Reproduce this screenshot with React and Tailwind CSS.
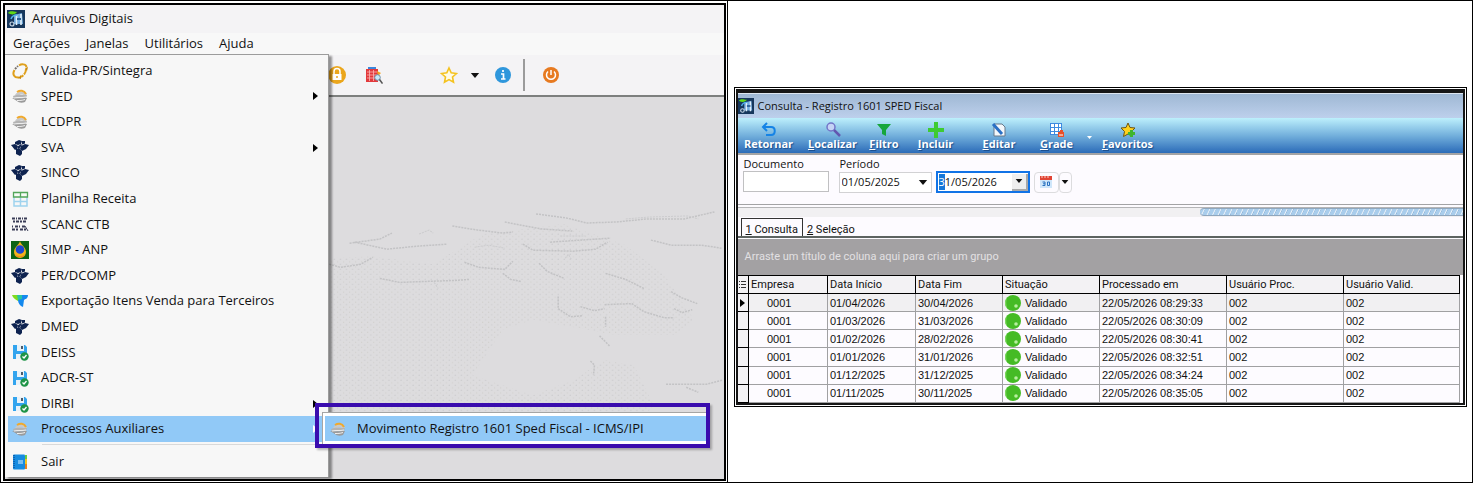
import { useEffect, useRef, useState } from "react";

const AppIcon = ({ className }) => (
  <svg viewBox="0 0 18 18" className={className} aria-hidden="true">
    <rect width="18" height="18" fill="#17375c" />
    <path d="M7 5l8-2 1 11H7z" fill="#6fa9dc" />
    <path d="M9.500 5v10M14 4v11" stroke="#e3f0fa" strokeWidth="1.600" />
    <path d="M10 9h4" stroke="#2b5f96" strokeWidth="2" />
    <path d="M1 3c3-3 5-1 9-1-2 3-6 3-9 1z" fill="#5fd816" />
    <circle cx="5" cy="14" r="2" fill="none" stroke="#c9d8e6" strokeWidth="1.200" />
    <path d="M4 9c1-3 3-4 6-4" stroke="#4fb4ee" fill="none" strokeWidth="1.500" />
  </svg>
);

const CycleIcon = () => (
  <svg viewBox="0 0 18 18" className="size-[18px]" aria-hidden="true">
    <g fill="none" stroke="#dfa01c" strokeWidth="2">
      <path d="M8 15.500C3 16 1 12 3.500 8" />
      <path d="M8 3.500C10 2 15 1.500 15.500 5" />
      <path d="M15 7c0 4-2 6-5 8" strokeDasharray="6 1" />
      <path d="M4 7L7 4" stroke="#77706a" strokeDasharray="2 1" />
    </g>
    <path d="M10 13v4l-3-1zM14 6l3-1-1 4z" fill="#c98a10" />
  </svg>
);

const SpedIcon = () => (
  <svg viewBox="0 0 18 18" className="size-[18px]" aria-hidden="true">
    <path d="M4 8c2-4 8-5 12-1l-2 2c-2-2-5-2-7 0z" fill="#c9c9c9" />
    <path d="M6 5c3-2 7-2 9 2" fill="none" stroke="#f0a92d" strokeWidth="2" />
    <path d="M2 9c4-2 9-1 14-1l-1 3c-4 0-8 1-12 1z" fill="#b4b4b4" />
    <path d="M1 11c5 1 9 0 15 0l-2 4c-3 1-6 1-8-1z" fill="#9b9b9b" />
    <path d="M3 11c4-1 8 0 12-1M6 13.500c3 0 5 0 8-1" stroke="#eee" fill="none" />
  </svg>
);

const ReceitaIcon = () => (
  <svg viewBox="0 0 18 18" className="size-[18px]" aria-hidden="true">
    <g fill="#0e2350">
      <path d="M4 3l4-2 3 1-1 3-3 1-3-1z" />
      <path d="M11 2l3 0 0 2.500-3 1z" />
      <path d="M0 6l4-1 3 2-1 3-2 1z" />
      <path d="M10 7l4-2 4 1-3 4-4 2-2-2z" />
      <path d="M5 10l3-1 3 3 0 3-2 2-4-2z" />
      <path d="M6 8l4-3 1 1-3 4z" />
    </g>
  </svg>
);

const SheetIcon = () => (
  <svg viewBox="0 0 18 18" className="size-[18px]" aria-hidden="true">
    <path d="M3 7v9h13V7M9.500 6v10M3 11.500h13" fill="none" stroke="#9fd3ee" strokeWidth="1.500" />
    <path d="M2.500 2.500h14v4.500h-14zM9.500 2.500V7" fill="#f6fbf6" stroke="#52a65a" strokeWidth="1.300" />
  </svg>
);

const ScancIcon = () => (
  <svg viewBox="0 0 18 18" className="size-[18px]" aria-hidden="true">
    <g stroke="#3a3d57" fill="none">
      <path d="M1 3.500h15" strokeWidth="2" strokeDasharray="3 1 1 1" />
      <path d="M2 6.500h13" strokeWidth="2" strokeDasharray="2 1 3 1" />
      <path d="M1 11.500h13" strokeWidth="2" strokeDasharray="1 2 3 1" />
      <path d="M1 14.500h16" strokeWidth="2" strokeDasharray="3 1 2 2" />
      <path d="M14 11l3 5" />
    </g>
  </svg>
);

const AnpIcon = () => (
  <svg viewBox="0 0 18 18" className="size-[18px]" aria-hidden="true">
    <rect width="18" height="18" fill="#0c6416" />
    <path d="M9 0c1 4 6 6 6 11a6 6 0 01-12 0C3 6 8 4 9 0z" fill="#f2b21b" />
    <path d="M4 13a6 5 0 0010 0l-2 3H6z" fill="#f08a1c" />
    <circle cx="9" cy="8.500" r="4.300" fill="#1c46cf" />
  </svg>
);

const ExportIcon = () => (
  <svg viewBox="0 0 18 18" className="size-[18px]" aria-hidden="true">
    <path d="M1 3h7l2 5-3 1C4 7 2 6 1 3z" fill="#7fdc1e" />
    <path d="M6 3h6l-1 6-4-1z" fill="#28c3a4" />
    <path d="M11 3h6c0 4-3 4-4 5l-1 7c-3-1-5-4-5-7l4-1z" fill="#1489ee" />
  </svg>
);

const DiskIcon = () => (
  <svg viewBox="0 0 18 18" className="size-[18px]" aria-hidden="true">
    <path d="M2 2h12l2 2v12H2z" fill="#32a4ee" />
    <path d="M6 2h7v6H6zM5 11h7v5H5z" fill="#e9f2f8" />
    <path d="M10 3h2v3h-2z" fill="#4b5a6a" />
    <circle cx="13.500" cy="13.500" r="4.200" fill="#1f9447" />
    <path d="M11.500 13.500l1.500 1.500 2.500-3" stroke="#fff" strokeWidth="1.300" fill="none" />
  </svg>
);

const NotebookIcon = () => (
  <svg viewBox="0 0 18 18" className="size-[18px]" aria-hidden="true">
    <rect x="2" y="1.500" width="12" height="15" rx="1" fill="#168be0" />
    <path d="M3 2v14" stroke="#0f62b0" strokeWidth="2" strokeDasharray="1 1" />
    <path d="M7 8h5M7 10h5" stroke="#d8efff" />
    <path d="M14 2h2v4h-2z" fill="#6c4" />
    <path d="M14 6h2v5h-2z" fill="#f5c21a" />
    <path d="M14 11h2v5h-2z" fill="#e8821e" />
  </svg>
);

const CaretDown = ({ className }) => (
  <svg viewBox="0 0 10 6" className={className} fill="currentColor" aria-hidden="true">
    <path d="M0 0h10L5 6z" />
  </svg>
);

const menuItems = [
  { label: "Valida-PR/Sintegra", icon: CycleIcon },
  { label: "SPED", icon: SpedIcon, sub: true },
  { label: "LCDPR", icon: SpedIcon },
  { label: "SVA", icon: ReceitaIcon, sub: true },
  { label: "SINCO", icon: ReceitaIcon },
  { label: "Planilha Receita", icon: SheetIcon },
  { label: "SCANC CTB", icon: ScancIcon },
  { label: "SIMP - ANP", icon: AnpIcon },
  { label: "PER/DCOMP", icon: ReceitaIcon },
  { label: "Exportação Itens Venda para Terceiros", icon: ExportIcon },
  { label: "DMED", icon: ReceitaIcon },
  { label: "DEISS", icon: DiskIcon },
  { label: "ADCR-ST", icon: DiskIcon },
  { label: "DIRBI", icon: DiskIcon, sub: true },
  { label: "Processos Auxiliares", icon: SpedIcon, sub: true, active: true },
];

const rows = [
  ["0001", "01/04/2026", "30/04/2026", "Validado", "22/05/2026 08:29:33", "002", "002"],
  ["0001", "01/03/2026", "31/03/2026", "Validado", "22/05/2026 08:30:09", "002", "002"],
  ["0001", "01/02/2026", "28/02/2026", "Validado", "22/05/2026 08:30:41", "002", "002"],
  ["0001", "01/01/2026", "31/01/2026", "Validado", "22/05/2026 08:32:51", "002", "002"],
  ["0001", "01/12/2025", "31/12/2025", "Validado", "22/05/2026 08:34:24", "002", "002"],
  ["0001", "01/11/2025", "30/11/2025", "Validado", "22/05/2026 08:35:05", "002", "002"],
];

function MapBackdrop() {
  return (
    <svg viewBox="0 0 717 379" preserveAspectRatio="xMaxYMin slice" className="block h-full w-full" aria-hidden="true">
      <defs>
        <pattern id="dots" width="6" height="5" patternUnits="userSpaceOnUse">
          <circle cx="1" cy="1" r=".6" fill="#c6c6c9" />
          <circle cx="4" cy="3.500" r=".6" fill="#d0cfcb" />
        </pattern>
      </defs>
      <path
        d="M323 160l45-2 60 8 50-30 80-10 60 20 40 30 30 45-20 15-60 0-80-15-30 10-30 45 60 20 40-15 30-20 30 5 20 40-30 30H323z"
        fill="url(#dots)"
      />
      <g fill="none" stroke="#c3c3c5" strokeWidth="1.500" strokeDasharray="2 1">
        <path d="M323 165l14 4 20-3 12-7M346 145l30-4 12-6M351 144l32 7 30-3 30-2M376 180l20 4 25-1 30-1 14-1" />
        <path d="M448 128l25 4 25 3 10-1M500 124l15 3 22 4 30 2M531 116l30 4 20 5 30-1 30-3 37 0 30-7" />
        <path d="M518 146l10 6 40 1 22-2 12-7M545 144l30-2 30-2M645 142l20 5 30 0 20 3M460 164l14 5 26 2 8-8M498 175l8 6 10 2" />
        <path d="M534 165l8 8 17 7M600 175l20 6 18 9M553 198l0 12 12 8 12-1M575 208l14 4 10-2M599 206l27-1 12 8 20 6 10 0" />
        <path d="M665 193l10 6 16 6M668 210l8 4 10-3M600 218v10M594 237l10 10M585 262l4 4-1 10M660 285l40 0 16-4M680 288l12 5" />
      </g>
      <g fill="none" stroke="#ccccce">
        <path d="M415 136l10-4 4 3M430 184l4 6M560 160l3-4 3 5M470 149l14-2 16 3M620 121l25-2 37-1 10 3M555 138l25 0" strokeDasharray="2 1" />
      </g>
    </svg>
  );
}

function Submenu() {
  return (
    <div className="absolute top-[-13px] left-[307px] z-20 w-[395px] border-4 border-[#3a0cae] pt-[5px] pl-[3px] shadow-[2px_2px_2px_#0004]">
      <div className="border-t border-l border-[#a5a5a5] bg-white pt-[3px] pb-[3px] pl-[2px]">
        <button className="flex h-[25px] w-full items-center gap-[10px] bg-[#91c9f7] pl-1 text-left whitespace-nowrap">
          <SpedIcon />
          Movimento Registro 1601 Sped Fiscal - ICMS/IPI
        </button>
      </div>
    </div>
  );
}

function DropdownMenu() {
  return (
    <div className="absolute top-[49px] left-0 z-10 w-[324px] border-t border-r border-[#9c9c9c] bg-[#f7f7f7] pt-[3px] pb-px pl-[3px] shadow-[3px_2px_2px_#0006]">
      <ul className="grid h-[384px] auto-rows-fr">
        {menuItems.map(({ label, icon: Icon, sub, active }) => (
          <li key={label} className="relative">
            <button
              className={`flex h-full w-full items-center gap-3 pr-[10px] pl-[3px] text-left ${active ? "bg-[#91c9f7]" : ""}`}
            >
              <Icon />
              <span className="flex-1">{label}</span>
              {sub && (
                <svg viewBox="0 0 5 8" className={`h-2 w-[5px] ${active ? "text-white" : "text-black"}`} aria-hidden="true">
                  <path d="M0 0l5 4-5 4z" fill="currentColor" />
                </svg>
              )}
            </button>
            {active && <Submenu />}
          </li>
        ))}
      </ul>
      <hr className="mt-[2px] ml-[34px] border-[#d9d9d9]" />
      <button className="mt-[3px] flex h-7 w-full items-center gap-3 pl-[3px] text-left">
        <NotebookIcon />
        Sair
      </button>
    </div>
  );
}

function ArquivosDigitais() {
  return (
    <section className="min-w-0 flex-[723] border-r border-black bg-white pt-[2px] pr-px pb-px pl-[2px]">
      <div className="relative flex h-[478px] flex-col overflow-hidden border-2 border-black bg-[#dddcde] font-['Open_Sans','Noto_Sans',sans-serif] text-[13px] text-[#111]">
        <header className="flex h-[28px] items-center gap-[7px] bg-[#f4f3f5] pl-[2px]">
          <AppIcon className="size-[18px]" />
          <h1>Arquivos Digitais</h1>
        </header>
        <nav className="flex h-[22px] items-center gap-4 bg-[#f8f8f8] pl-2">
          <button>Gerações</button>
          <button>Janelas</button>
          <button>Utilitários</button>
          <button>Ajuda</button>
        </nav>
        <div className="flex h-[42px] items-center border-b-2 border-[#7d7f7e] bg-[#f4f3f5] pl-[323px]">
          <button aria-label="Bloquear">
            <svg viewBox="0 0 18 18" className="size-[18px]">
              <circle cx="9" cy="9" r="9" fill="#eba61c" />
              <rect x="4.500" y="8" width="9" height="6" fill="#fff" />
              <path d="M6 8V5.500a3 3 0 016 0V8" fill="none" stroke="#fff" strokeWidth="1.500" />
              <circle cx="9" cy="11" r="1" fill="#eba61c" />
            </svg>
          </button>
          <button aria-label="Consultar grade" className="ml-[19px]">
            <svg viewBox="0 0 18 18" className="size-[18px]">
              <path d="M3 1h8v3H3z" fill="#3b86dc" />
              <rect x="1" y="3" width="12" height="13" fill="#e2393c" />
              <path d="M2 6h10M2 9h10M2 12h10M4.500 4v11M8.500 4v11" stroke="#fbb5b2" strokeWidth=".8" />
              <path d="M12 5l4 2-3 3z" fill="#f3a41f" />
              <circle cx="12.500" cy="11.500" r="2.800" fill="#c9e8f8" stroke="#6d8fa6" />
              <path d="M14.500 13.500l3 4" stroke="#555" strokeWidth="1.500" />
            </svg>
          </button>
          <button aria-label="Favoritos" className="ml-[57px]">
            <svg viewBox="0 0 18 18" className="size-[18px]">
              <path
                d="M9 2l2.200 4.800 5.300.7-4 3.500 1 5.200L9 13.600l-4.500 2.600 1-5.200-4-3.500 5.300-.7z"
                fill="#fffbe6"
                stroke="#f4c21f"
                strokeWidth="1.600"
              />
            </svg>
          </button>
          <button aria-label="Mais favoritos" className="ml-3">
            <CaretDown className="h-[5px] w-[10px]" />
          </button>
          <button aria-label="Informações" className="ml-[14px]">
            <svg viewBox="0 0 18 18" className="size-[18px]">
              <circle cx="9" cy="9" r="8" fill="#2f97dc" />
              <path d="M9 4v2M7 8h2.500v5M7 13h4.500" stroke="#fff" strokeWidth="1.700" fill="none" />
            </svg>
          </button>
          <span className="ml-[11px] h-8 w-[2px] bg-[#9b9b9b]" />
          <button aria-label="Encerrar" className="ml-[17px]">
            <svg viewBox="0 0 18 18" className="size-[18px]">
              <circle cx="9" cy="9" r="8" fill="#e77a20" />
              <path d="M6 5.500a4.500 4.500 0 106 0M9 4v5" stroke="#fff" strokeWidth="1.500" fill="none" />
            </svg>
          </button>
        </div>
        <main className="min-h-0 flex-1">
          <MapBackdrop />
        </main>
        <DropdownMenu />
      </div>
    </section>
  );
}

const tools = [
  {
    label: "Retornar",
    width: "w-[60px]",
    icon: <path d="M6 1L2 5l4 4M2 5h8c5 0 5 8 0 8H5" fill="none" stroke="#1583e6" strokeWidth="2" />,
  },
  {
    label: "Localizar",
    hot: true,
    width: "w-[68px]",
    icon: (
      <>
        <circle cx="6" cy="5" r="4" fill="#c5d3f5" stroke="#7275c8" strokeWidth="1.500" />
        <path d="M9 8l6 6" stroke="#6257b0" strokeWidth="2.500" />
      </>
    ),
  },
  { label: "Filtro", hot: true, width: "w-[35px]", icon: <path d="M1 2h14l-5 6v6l-4-2V8z" fill="#17a63c" /> },
  {
    label: "Incluir",
    hot: true,
    width: "w-[68px]",
    icon: <path d="M6 0h4v6h6v4h-6v6H6v-6H0V6h6z" fill="#3ecb32" />,
  },
  {
    label: "Editar",
    hot: true,
    width: "w-[59px]",
    icon: (
      <>
        <path d="M3 2h8l3 3v9H3z" fill="#f3f7fb" stroke="#68798a" />
        <path d="M2 2l9 10" stroke="#2a6fc4" strokeWidth="3" />
      </>
    ),
  },
  {
    label: "Grade",
    hot: true,
    width: "w-[56px]",
    icon: (
      <>
        <rect x="1" y="1" width="12" height="12" fill="#fff" />
        <path d="M1.500 1v12M5.500 1v12M9.500 1v12M12.500 1v12M1 1.500h12M1 5.500h12M1 9.500h12M1 12.500h12" stroke="#3d8ae0" />
        <path d="M9 10h2V8h3v2h1v5H9z" fill="#e8502a" />
        <path d="M10 13h4" stroke="#fff" />
      </>
    ),
  },
  {
    label: "Favoritos",
    hot: true,
    width: "w-[66px]",
    icon: (
      <>
        <path d="M8 1l2 4.500 5 .500-3.500 3.500 1 5L8 12l-4.500 2.500 1-5L1 6l5-.500z" fill="#ffd21e" stroke="#6e5412" />
        <path d="M10 8h3v2h2v3h-2v2h-3v-2H8v-3h2z" fill="#3fb52f" />
      </>
    ),
  },
];

function ToolButton({ label, hot, width, icon }) {
  return (
    <button className={`flex flex-col items-center ${width}`}>
      <svg viewBox="0 0 16 16" className="size-4" aria-hidden="true">
        {icon}
      </svg>
      <span className="text-[11px] leading-3 font-bold text-white [text-shadow:1px_1px_1px_#1b4f8f]">
        {hot ? <u>{label[0]}</u> : label[0]}
        {label.slice(1)}
      </span>
    </button>
  );
}

function FilterBar() {
  const endRef = useRef(null);

  useEffect(() => {
    endRef.current.focus();
    endRef.current.setSelectionRange(0, 1);
  }, []);

  return (
    <form className="flex h-[52px] items-start border-t-2 border-b border-[#a3a3a5] bg-[#fdfbff] pt-[2px] pl-[5px] text-[11px]">
      <div className="flex w-24 flex-col">
        <label htmlFor="documento" className="pl-px leading-[14px]">Documento</label>
        <input id="documento" className="h-[21px] w-[86px] border border-[#c0c0c2] bg-white px-1 outline-none" />
      </div>
      <div className="flex flex-col">
        <label htmlFor="inicio" className="pl-px leading-[14px]">Período</label>
        <div className="flex items-center">
          <div className="flex h-[21px] w-[93px] items-center border border-[#d2d2d4] bg-white">
            <input id="inicio" defaultValue="01/05/2025" className="w-[78px] pl-[2px] outline-none" />
            <button type="button" aria-label="Abrir data inicial">
              <CaretDown className="h-[5px] w-[10px]" />
            </button>
          </div>
          <div className="ml-1 flex h-[22px] w-[94px] items-center border-2 border-[#1173e6] bg-white">
            <input
              ref={endRef}
              aria-label="Data final"
              defaultValue="31/05/2026"
              className="w-[74px] pl-px outline-none selection:bg-[#1677d8] selection:text-white"
            />
            <button
              type="button"
              aria-label="Abrir data final"
              className="flex h-[17px] w-4 items-center justify-center border-r-2 border-b-2 border-[#a9a9a9] bg-[#efefef]"
            >
              <CaretDown className="h-1 w-2" />
            </button>
          </div>
          <button
            type="button"
            aria-label="Calendário"
            className="ml-1 flex h-[21px] w-[25px] items-center justify-center rounded-sm border border-[#dcdcde]"
          >
            <svg viewBox="0 0 14 14" className="size-[14px]">
              <rect x="1" y="4" width="12" height="9" fill="#cfe6fa" />
              <rect x="1" y="1" width="12" height="4" fill="#e04434" />
              <path d="M3 1v2M6 1v2M9 1v2" stroke="#fbd0c8" />
              <path d="M3.500 7h2.500v3.500H3.500M4 8.800h2M8.500 7h2v3.500h-2z" fill="none" stroke="#2a72c0" />
            </svg>
          </button>
          <button
            type="button"
            aria-label="Mais períodos"
            className="flex h-[21px] w-[13px] items-center justify-center rounded-sm border border-[#dcdcde]"
          >
            <CaretDown className="h-1 w-2" />
          </button>
        </div>
      </div>
    </form>
  );
}

function ResultsTable() {
  return (
    <div className="bg-[#fdfbff] pr-1 font-['Liberation_Sans',Arial,sans-serif] text-[11px] leading-[14px]">
      <table className="h-[128px] w-full table-fixed border-collapse">
        <colgroup>
          <col className="w-[11px]" />
          <col className="w-[79px]" />
          <col className="w-[88px]" />
          <col className="w-[87px]" />
          <col className="w-[97px]" />
          <col className="w-[127px]" />
          <col className="w-[117px]" />
          <col className="w-[116px]" />
        </colgroup>
        <thead className="font-[Roboto,sans-serif]">
          <tr className="h-[18px] bg-[#f3f2f4]">
            <th className="border border-l-0 border-black p-0" aria-label="Marcador">
              <svg viewBox="0 0 8 9" className="mx-auto h-[9px] w-2" aria-hidden="true">
                <path d="M0 1.500h1M0 4.500h1M0 7.500h1M2 1.500h5M2 4.500h5M2 7.500h5" stroke="#333" />
              </svg>
            </th>
            {["Empresa", "Data Início", "Data Fim", "Situação", "Processado em", "Usuário Proc.", "Usuário Valid."].map((h) => (
              <th key={h} className="border border-black p-0 pl-[2px] text-left font-normal">{h}</th>
            ))}
          </tr>
        </thead>
        <tbody>
          {rows.map((row, i) => (
            <tr key={row[4]} className={i === 0 ? "bg-[#f1f0f2]" : ""}>
              <td className="border border-l-0 border-black bg-[#f3f2f4] p-0">
                {i === 0 && (
                  <svg viewBox="0 0 5 8" className="mx-auto h-2 w-[5px]" aria-hidden="true">
                    <path d="M0 0l5 4-5 4z" />
                  </svg>
                )}
              </td>
              {row.map((cell, j) => (
                <td key={j} className={`border border-[#a0a0a2] p-0 ${j === 0 ? "pl-[18px]" : "pl-[2px]"}`}>
                  {j === 3 ? (
                    <span className="flex items-center gap-1">
                      <svg viewBox="0 0 16 16" className="size-4" aria-hidden="true">
                        <circle cx="8" cy="8" r="8" fill="#45bb25" />
                        <path d="M2 3a8 8 0 000 10c-1-4-1-7 0-10z" fill="#7fda62" />
                        <circle cx="11" cy="11" r="1.800" fill="#b7ef9f" />
                      </svg>
                      {cell}
                    </span>
                  ) : (
                    cell
                  )}
                </td>
              ))}
            </tr>
          ))}
        </tbody>
      </table>
    </div>
  );
}

function ConsultaRegistro() {
  const [tab, setTab] = useState(1);
  const tabs = [
    { id: 1, label: "Consulta" },
    { id: 2, label: "Seleção" },
  ];

  return (
    <section className="min-w-0 flex-[734] bg-white pt-[86px] pr-[5px] pl-[6px]">
      <div className="border border-black bg-white p-px">
        <div className="border-2 border-t-4 border-[#161616] bg-[#fdfbff] font-['Open_Sans','Noto_Sans',sans-serif] text-[#111]">
          <header className="flex h-[25px] items-center gap-1 border-t border-[#dde6f0] bg-linear-to-b from-[#9fb8d4] to-[#bdd0ec]">
            <AppIcon className="size-4" />
            <h2 className="text-[11px]">Consulta - Registro 1601 SPED Fiscal</h2>
          </header>
          <div className="flex h-[35px] bg-linear-to-b from-[#bdf0fc] via-[#73b0dc] to-[#2b6bb8] pt-1 pl-px">
            {tools.slice(0, 6).map((t) => (
              <ToolButton key={t.label} {...t} />
            ))}
            <button aria-label="Opções da grade" className="flex w-[10px] items-center justify-center text-white">
              <CaretDown className="h-[3px] w-[7px]" />
            </button>
            <ToolButton {...tools[6]} />
          </div>
          <FilterBar />
          <div className="mt-[2px] flex h-[10px] border-t border-[#b5b5b7] bg-[#f1f0f2]">
            <span className="flex-[463]" />
            <span className="h-2 flex-[263] rounded-l-sm border-y border-[#8fa6bd] bg-[repeating-linear-gradient(115deg,#a9cdec_0px,#a9cdec_3px,#eef4fa_4px,#8fb6da_5px)]" />
          </div>
          <div role="tablist" className="flex h-[21px] items-end border-b-2 border-[#5d6361] pl-[3px] font-[Roboto,sans-serif] text-[11px]">
            {tabs.map((t) => (
              <button
                key={t.id}
                role="tab"
                aria-selected={tab === t.id}
                onClick={() => setTab(t.id)}
                className={`h-[18px] pt-1 leading-[13px] ${tab === t.id ? "border-x border-t border-[#333] px-1" : "px-1"}`}
              >
                <u>{t.id}</u> {t.label}
              </button>
            ))}
          </div>
          <p className="mt-px flex h-9 items-center bg-[#a3a1a3] pl-[7px] font-[Roboto,sans-serif] text-[11px] text-[#e2e0e2]">
            Arraste um título de coluna aqui para criar um grupo
          </p>
          <ResultsTable />
        </div>
      </div>
    </section>
  );
}

export default function App() {
  return (
    <div className="flex w-full border border-black bg-white">
      <ArquivosDigitais />
      <ConsultaRegistro />
    </div>
  );
}
